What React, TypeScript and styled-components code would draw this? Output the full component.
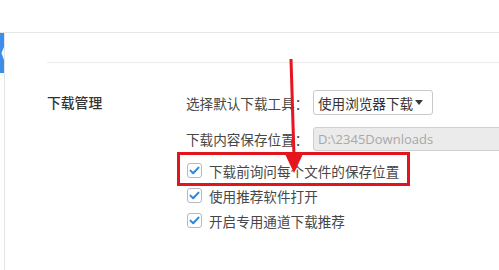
import * as React from "react";
import styled, { createGlobalStyle } from "styled-components";

const GlobalStyle = createGlobalStyle`
  html, body {
    margin: 0;
    padding: 0;
    background: #ffffff;
  }
  body {
    font-family: "Noto Sans CJK SC", "Microsoft YaHei", sans-serif;
    color: #444;
  }
`;

const Page = styled.div`
  position: relative;
  width: 499px;
  height: 270px;
  overflow: hidden;
  background: #fff;
`;

const TopBar = styled.div`
  height: 32px;
  border-bottom: 1px solid #e6e6e6;
`;

const Body = styled.div`
  display: flex;
  height: 237px;
`;

const Rail = styled.div`
  width: 4px;
  flex: none;
  border-right: 1px solid #e4e4e8;
`;

const ActiveTab = styled.svg`
  display: block;
  width: 4px;
  height: 40px;
`;

const Content = styled.div`
  flex: 1;
  padding-left: 42px;
`;

const Divider = styled.div`
  margin-top: 29px;
  height: 1px;
  background: #ececec;
`;

const Section = styled.div`
  display: flex;
  padding-top: 27px;
`;

const SectionTitle = styled.div`
  width: 139px;
  flex: none;
  height: 25px;
  line-height: 25px;
  font-size: 13.8px;
  font-weight: 500;
  color: #333;
`;

const Options = styled.div`
  display: flex;
  flex-direction: column;
  flex: 1;
`;

const FieldRow = styled.div`
  display: flex;
  align-items: center;
  height: 25px;
  white-space: nowrap;

  & + & {
    margin-top: 11px;
  }
`;

const Label = styled.span`
  width: 127px;
  flex: none;
  font-size: 13.6px;
  color: #474747;
`;

const Select = styled.div`
  display: flex;
  align-items: center;
  box-sizing: border-box;
  width: 120px;
  height: 25px;
  padding-left: 4px;
  border: 1px solid #c9c9c9;
  border-radius: 3px;
  font-size: 13.6px;
  color: #333;
  background: #fff;
`;

const Caret = styled.span`
  margin-left: 2px;
  width: 0;
  height: 0;
  border-left: 4px solid transparent;
  border-right: 4px solid transparent;
  border-top: 5px solid #3a3a3a;
`;

const PathInput = styled.div`
  box-sizing: border-box;
  width: 220px;
  height: 24px;
  line-height: 22px;
  padding-left: 4px;
  border: 1px solid #cfcfcf;
  border-radius: 3px;
  background: #ebebeb;
  font-family: "Open Sans", "Noto Sans", sans-serif;
  font-size: 13px;
  color: #a8a8a8;
`;

const CheckList = styled.div`
  margin-top: 7px;
  display: flex;
  flex-direction: column;
`;

const CheckRow = styled.label`
  display: flex;
  align-items: center;
  height: 25px;
  gap: 7px;
  padding-left: 1px;
  font-size: 13.6px;
  color: #474747;
  white-space: nowrap;
`;

const Box = styled.span`
  display: flex;
  align-items: center;
  justify-content: center;
  box-sizing: border-box;
  width: 15px;
  height: 15px;
  border: 1px solid #b8b8b8;
  border-radius: 3px;
  background: #fff;
`;

const Highlight = styled.div`
  position: absolute;
  left: 177px;
  top: 152px;
  width: 233px;
  height: 34px;
  box-sizing: border-box;
  border: 3px solid #e2151f;
  pointer-events: none;
`;

const ArrowLayer = styled.svg`
  position: absolute;
  left: 0;
  top: 0;
  width: 499px;
  height: 270px;
  pointer-events: none;
`;

const Check = () => (
  <Box>
    <svg width="11" height="9" viewBox="0 0 11 9">
      <path d="M1.5 4.6 L4.2 7.2 L9.5 1.6" fill="none" stroke="#2b86de" strokeWidth="2" strokeLinecap="round" strokeLinejoin="round" />
    </svg>
  </Box>
);

const checks = ["下载前询问每个文件的保存位置", "使用推荐软件打开", "开启专用通道下载推荐"];

export default function App() {
  return (
    <Page>
      <GlobalStyle />
      <TopBar />
      <Body>
        <Rail>
          <ActiveTab viewBox="0 0 4 40">
            <path d="M0 0 H4 V14 L1.5 20 L4 27 V40 H0 Z" fill="#3d8ee8" />
          </ActiveTab>
        </Rail>
        <Content>
          <Divider />
          <Section>
            <SectionTitle>下载管理</SectionTitle>
            <Options>
              <FieldRow>
                <Label>选择默认下载工具：</Label>
                <Select>
                  使用浏览器下载
                  <Caret />
                </Select>
              </FieldRow>
              <FieldRow>
                <Label>下载内容保存位置：</Label>
                <PathInput>D:\2345Downloads</PathInput>
              </FieldRow>
              <CheckList>
                {checks.map(c => (
                  <CheckRow key={c}>
                    <Check />
                    {c}
                  </CheckRow>
                ))}
              </CheckList>
            </Options>
          </Section>
        </Content>
      </Body>
      <Highlight />
      <ArrowLayer viewBox="0 0 499 270">
        <line x1="291" y1="59" x2="294" y2="157" stroke="#e8141e" strokeWidth="3" />
        <polygon points="285,154 303,154 294,173" fill="#e8141e" />
      </ArrowLayer>
    </Page>
  );
}
